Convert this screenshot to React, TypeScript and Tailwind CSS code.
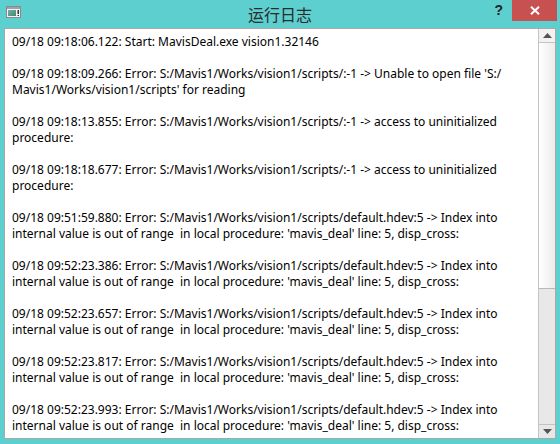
import React from "react";

const lines: string[] = [
  "09/18 09:18:06.122: Start: MavisDeal.exe vision1.32146",
  "",
  "09/18 09:18:09.266: Error: S:/Mavis1/Works/vision1/scripts/:-1 -> Unable to open file 'S:/",
  "Mavis1/Works/vision1/scripts' for reading",
  "",
  "09/18 09:18:13.855: Error: S:/Mavis1/Works/vision1/scripts/:-1 -> access to uninitialized",
  "procedure:",
  "",
  "09/18 09:18:18.677: Error: S:/Mavis1/Works/vision1/scripts/:-1 -> access to uninitialized",
  "procedure:",
  "",
  "09/18 09:51:59.880: Error: S:/Mavis1/Works/vision1/scripts/default.hdev:5 -> Index into",
  "internal value is out of range  in local procedure: 'mavis_deal' line: 5, disp_cross:",
  "",
  "09/18 09:52:23.386: Error: S:/Mavis1/Works/vision1/scripts/default.hdev:5 -> Index into",
  "internal value is out of range  in local procedure: 'mavis_deal' line: 5, disp_cross:",
  "",
  "09/18 09:52:23.657: Error: S:/Mavis1/Works/vision1/scripts/default.hdev:5 -> Index into",
  "internal value is out of range  in local procedure: 'mavis_deal' line: 5, disp_cross:",
  "",
  "09/18 09:52:23.817: Error: S:/Mavis1/Works/vision1/scripts/default.hdev:5 -> Index into",
  "internal value is out of range  in local procedure: 'mavis_deal' line: 5, disp_cross:",
  "",
  "09/18 09:52:23.993: Error: S:/Mavis1/Works/vision1/scripts/default.hdev:5 -> Index into",
  "internal value is out of range  in local procedure: 'mavis_deal' line: 5, disp_cross:",
  "",
];

function AppIcon() {
  return (
    <svg width="15" height="12" viewBox="0 0 15 12">
      <defs>
        <linearGradient id="ig" x1="0" y1="0" x2="1" y2="1">
          <stop offset="0" stopColor="#7aa8c8" />
          <stop offset="1" stopColor="#3f8f5a" />
        </linearGradient>
      </defs>
      <rect x="0.5" y="0.5" width="14" height="11" fill="#f4f4f4" stroke="#8a8a8a" />
      <rect x="1" y="1" width="13" height="2" fill="#9aa4ad" />
      <rect x="2" y="4" width="8" height="6" fill="url(#ig)" />
      <rect x="11.5" y="4" width="1.5" height="4" fill="#333" />
      <rect x="11.5" y="9" width="1.5" height="1" fill="#333" />
    </svg>
  );
}

export default function App() {
  return (
    <div className="w-[560px] h-[444px] bg-[#5dcfcf] flex flex-col overflow-hidden" style={{ fontFamily: "'Noto Sans', sans-serif" }}>
      {/* title bar */}
      <div className="h-[28px] shrink-0 grid grid-cols-[1fr_auto_1fr]">
        <div className="flex items-start pt-[6px] pl-[6px]">
          <AppIcon />
        </div>
        <div className="flex items-center justify-center pb-[1px] text-[16px] text-[#2b2b2b]" style={{ fontFamily: "'Noto Sans CJK SC', sans-serif" }}>
          运行日志
        </div>
        <div className="flex items-start justify-end pr-[3px]">
          <div className="h-[21px] flex items-center pr-[9px] text-[14px] font-bold text-[#222]" style={{ fontFamily: "'Liberation Sans', sans-serif" }}>
            ?
          </div>
          <div className="w-[45px] h-[21px] bg-[#c75050] flex items-center justify-center">
            <svg width="10" height="9" viewBox="0 0 10 9">
              <path d="M1 0.8 L9 8.2 M9 0.8 L1 8.2" stroke="#fff" strokeWidth="2" />
            </svg>
          </div>
        </div>
      </div>
      {/* content */}
      <div className="flex-1 mx-[4px] mb-[5px] border border-[#a9a9a9] bg-white flex min-h-0">
        <div className="flex-1 min-w-0 overflow-hidden pt-[5px] pl-[7px] text-[12px] leading-[16px] text-black">
          {lines.map((l, i) => (
            <div key={i} className="h-[16px] whitespace-pre">
              {l}
            </div>
          ))}
        </div>
        <div className="w-[17px] shrink-0 border-l border-[#c4c4c4] bg-[#e8e8e8] flex flex-col">
          <div className="h-[14px] shrink-0 bg-[#f2f2f2] border-b border-[#c4c4c4] flex items-center justify-center">
            <svg width="9" height="5" viewBox="0 0 9 5">
              <path d="M0 5 L4.5 0 L9 5 Z" fill="#555" />
            </svg>
          </div>
          <div className="h-[246px] shrink-0 bg-gradient-to-r from-[#ffffff] to-[#ececec] border-b border-[#b8b8b8]" />
          <div className="flex-1" />
          <div className="h-[14px] shrink-0 border-t border-[#c4c4c4] bg-[#e8e8e8] flex items-center justify-center">
            <svg width="9" height="5" viewBox="0 0 9 5">
              <path d="M0 0 L4.5 5 L9 0 Z" fill="#555" />
            </svg>
          </div>
        </div>
      </div>
    </div>
  );
}
